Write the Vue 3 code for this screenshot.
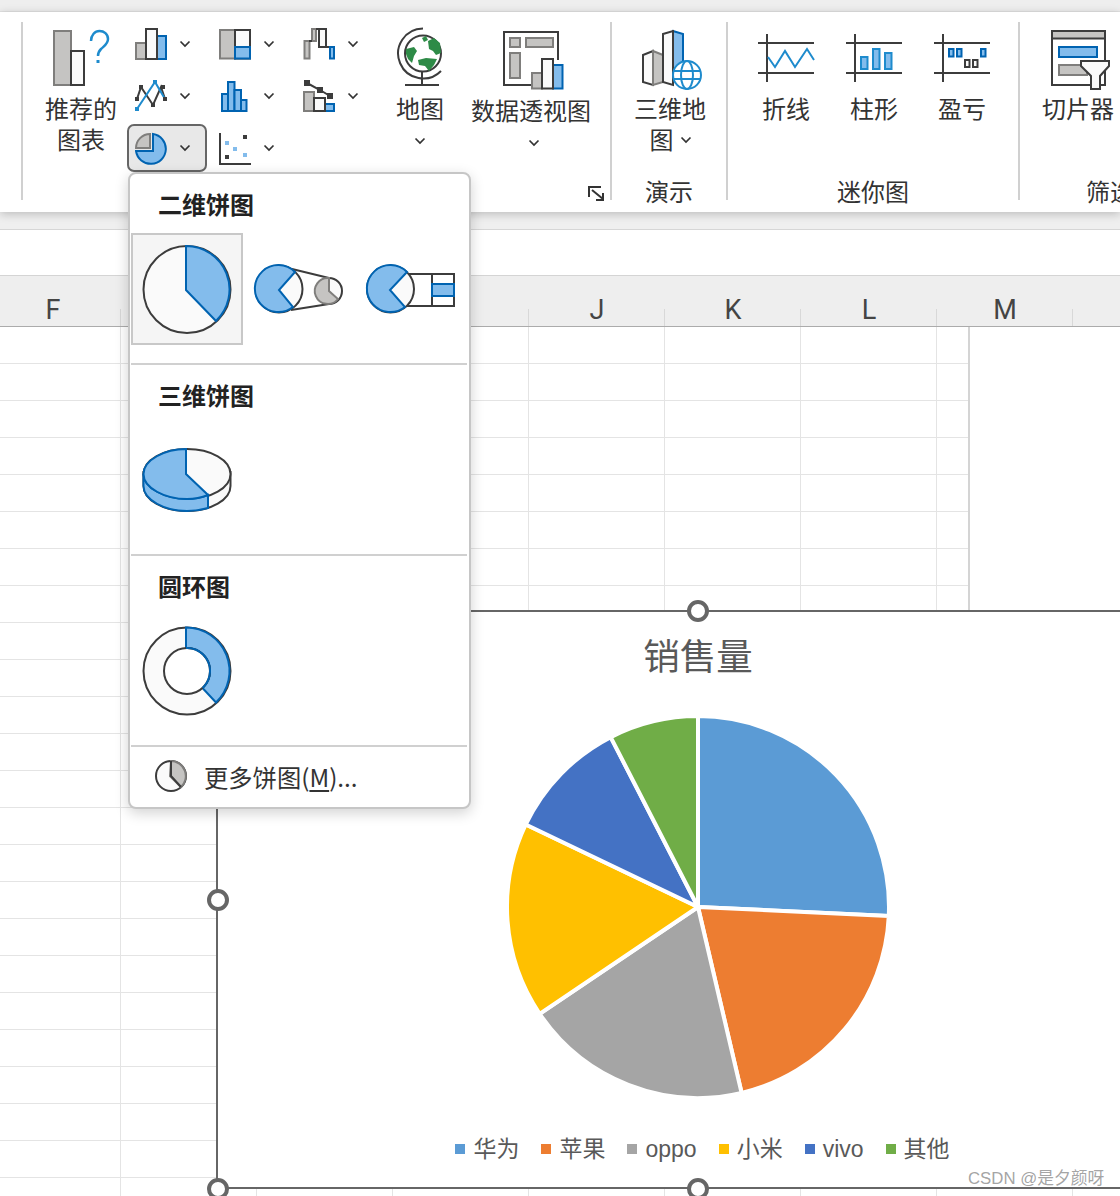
<script setup>
const columns = ['F', 'G', 'H', 'I', 'J', 'K', 'L', 'M', 'N']
const headerLabels = { F: 'F', J: 'J', K: 'K', L: 'L', M: 'M' }
const cells = Array.from({ length: 24 * 9 }, (_, i) => i)

const slices = [
  { name: '华为', color: '#5B9BD5', from: 0, to: 92.7 },
  { name: '苹果', color: '#ED7D31', from: 92.7, to: 166.8 },
  { name: 'oppo', color: '#A5A5A5', from: 166.8, to: 236 },
  { name: '小米', color: '#FFC000', from: 236, to: 295.6 },
  { name: 'vivo', color: '#4472C4', from: 295.6, to: 332.8 },
  { name: '其他', color: '#70AD47', from: 332.8, to: 360 }
]

const R = 191

function point(angle) {
  const a = (angle * Math.PI) / 180
  return `${(200 + R * Math.sin(a)).toFixed(2)} ${(200 - R * Math.cos(a)).toFixed(2)}`
}

function slicePath(s) {
  const large = s.to - s.from > 180 ? 1 : 0
  return `M200 200 L${point(s.from)} A${R} ${R} 0 ${large} 1 ${point(s.to)} Z`
}
</script>

<template>
  <div class="page">
    <div class="topstrip"></div>

    <div class="ribbon">
      <section class="group g1">
        <div class="cmds">
          <div class="big rec">
            <svg class="ico" width="60" height="72" viewBox="51 22 60 72">
              <rect x="54" y="31" width="17" height="54" class="gray" />
              <rect x="71" y="51" width="13" height="34" class="white" />
              <path d="M91 41C91 35 95 31 99.500 31C104 31 108 34 108 39C108 44 104 46 101 49C99 51 98 52 98 56" fill="none" stroke="#1e8bcd" stroke-width="2.500" />
              <rect x="96.500" y="60" width="3" height="3" fill="#1e8bcd" />
            </svg>
            <span class="lbl">推荐的<br />图表</span>
          </div>

          <div class="smallgrid">
            <div class="small">
              <svg width="33" height="33" viewBox="135 28 33 33">
                <rect x="136" y="43" width="10" height="16" class="gray" />
                <rect x="157" y="36" width="9" height="23" class="blue" />
                <rect x="146" y="29" width="11" height="30" class="white" />
              </svg>
              <svg class="chev" width="10" height="6" viewBox="0 0 10 6"><path d="M.5.5 5 5 9.500.5" /></svg>
            </div>
            <div class="small">
              <svg width="33" height="33" viewBox="219 28 33 33">
                <rect x="220" y="30" width="15" height="28.500" class="gray" />
                <rect x="235" y="30" width="15" height="28.500" class="white" />
                <rect x="235" y="47" width="15" height="11.500" class="blue" />
              </svg>
              <svg class="chev" width="10" height="6" viewBox="0 0 10 6"><path d="M.5.5 5 5 9.500.5" /></svg>
            </div>
            <div class="small">
              <svg width="33" height="33" viewBox="303 28 33 33">
                <rect x="304.500" y="41" width="5" height="17.500" class="gray" />
                <rect x="312" y="29" width="4" height="12" class="gray" />
                <path d="M309 41H312M316 29H319M326 47H330" class="line" />
                <rect x="319" y="29" width="7" height="18" class="white" />
                <rect x="330" y="47" width="4" height="11.500" class="blue" />
              </svg>
              <svg class="chev" width="10" height="6" viewBox="0 0 10 6"><path d="M.5.5 5 5 9.500.5" /></svg>
            </div>

            <div class="small">
              <svg width="33" height="33" viewBox="135 79 33 33">
                <path d="M137 98 141 86 153 104 161 86 165 98" class="line" />
                <path d="M137 108 155 81 165 98" fill="none" stroke="#1e8bcd" stroke-width="2" />
                <rect x="135" y="96" width="4" height="4" fill="#3c3c3c" />
                <rect x="139" y="84" width="4" height="4" fill="#3c3c3c" />
                <rect x="151" y="102" width="4" height="4" fill="#3c3c3c" />
                <rect x="161" y="84" width="4" height="4" fill="#3c3c3c" />
                <rect x="163" y="96" width="4" height="4" fill="#3c3c3c" />
                <rect x="135" y="106" width="4" height="4" fill="#1e8bcd" />
                <rect x="153" y="79" width="4" height="4" fill="#1e8bcd" />
              </svg>
              <svg class="chev" width="10" height="6" viewBox="0 0 10 6"><path d="M.5.5 5 5 9.500.5" /></svg>
            </div>
            <div class="small">
              <svg width="33" height="33" viewBox="219 79 33 33">
                <rect x="222" y="93" width="6" height="17" class="blue" />
                <rect x="228" y="81" width="6.500" height="29" class="blue" />
                <rect x="234.500" y="89" width="6.500" height="21" class="blue" />
                <rect x="241" y="99" width="5.500" height="11" class="blue" />
              </svg>
              <svg class="chev" width="10" height="6" viewBox="0 0 10 6"><path d="M.5.5 5 5 9.500.5" /></svg>
            </div>
            <div class="small">
              <svg width="33" height="33" viewBox="303 79 33 33">
                <rect x="304" y="91" width="10" height="19" class="gray" />
                <rect x="325" y="103" width="9" height="7" class="blue" />
                <rect x="314" y="97" width="11" height="13" class="white" />
                <path d="M307 82 320 89 330 95" class="line" />
                <rect x="304" y="79" width="6" height="6" fill="#3c3c3c" />
                <rect x="317" y="86" width="6" height="6" fill="#3c3c3c" />
                <rect x="327" y="92" width="6" height="6" fill="#3c3c3c" />
              </svg>
              <svg class="chev" width="10" height="6" viewBox="0 0 10 6"><path d="M.5.5 5 5 9.500.5" /></svg>
            </div>

            <div class="small active">
              <svg width="33" height="33" viewBox="135 131 33 33">
                <path d="M150 147H136A14 14 0 0 1 150 133Z" class="gray" />
                <path d="M153 133A15 15 0 1 1 136 150H153Z" class="blue" />
              </svg>
              <svg class="chev" width="10" height="6" viewBox="0 0 10 6"><path d="M.5.5 5 5 9.500.5" /></svg>
            </div>
            <div class="small">
              <svg width="33" height="33" viewBox="219 131 33 33">
                <path d="M220 132V163H251" class="line" />
                <rect x="243" y="134" width="4" height="4" fill="#3c3c3c" />
                <rect x="225" y="154" width="4" height="4" fill="#3c3c3c" />
                <rect x="225" y="140" width="4" height="4" fill="#83bcec" />
                <rect x="233" y="146" width="4" height="4" fill="#83bcec" />
                <rect x="243" y="152" width="4" height="4" fill="#83bcec" />
              </svg>
              <svg class="chev" width="10" height="6" viewBox="0 0 10 6"><path d="M.5.5 5 5 9.500.5" /></svg>
            </div>
          </div>

          <div class="big map">
            <svg class="ico" width="50" height="72" viewBox="395 22 50 72">
              <path d="M423 28.500A25 25 0 1 0 441 71" fill="none" stroke="#3c3c3c" stroke-width="2" />
              <circle cx="423" cy="53.500" r="18" fill="#fff" stroke="#3c3c3c" stroke-width="2" />
              <path d="M422 38 426 36 428 40 424 42ZM428 41 434 38 440 43 441 53 436 55 433 51 429 49ZM406 49 414 47 417 51 414 56 412 63 408 59 406 54ZM418 60 426 58 437 59 434 65 429 71 425 66 419 65Z" fill="#2e8b47" />
              <path d="M422 72V85M405 85H439" class="line" />
            </svg>
            <span class="lbl">地图</span>
            <span class="chevrow"><svg class="chev flat" width="10" height="6" viewBox="0 0 10 6"><path d="M.5.5 5 5 9.500.5" /></svg></span>
          </div>

          <div class="big pivot">
            <svg class="ico" width="62" height="72" viewBox="500 22 62 72" overflow="visible">
              <path d="M531 85H504V32H558V60" class="line" />
              <rect x="510" y="38" width="10" height="9" class="gray" />
              <rect x="526" y="38" width="27" height="9" class="gray" />
              <rect x="510" y="53" width="10" height="25" class="gray" />
              <rect x="532" y="73" width="10" height="15.500" class="gray" />
              <rect x="553" y="65" width="9.500" height="23.500" class="blue" />
              <rect x="542" y="59" width="11" height="29.500" class="white" />
            </svg>
            <span class="lbl low">数据透视图</span>
            <span class="chevrow nudge"><svg class="chev flat" width="10" height="6" viewBox="0 0 10 6"><path d="M.5.5 5 5 9.500.5" /></svg></span>
          </div>
        </div>
        <div class="glabel">图表</div>
        <svg class="launcher" width="17" height="15" viewBox="0 0 17 15">
          <path d="M1 11V1H13M4 4 15 13M15 7V14H8" fill="none" stroke="#333" stroke-width="2" />
        </svg>
      </section>

      <section class="group g2">
        <div class="cmds">
          <div class="big m3d">
            <svg class="ico" width="64" height="72" viewBox="638 22 64 72" overflow="visible">
              <path d="M643 55 653 51V85L643 82Z" class="white" />
              <path d="M653 51 663 55V82L653 85Z" class="gray" />
              <path d="M673 31 683 34V70H673Z" class="blue" />
              <path d="M663 34 673 31V85L663 82Z" class="white" />
              <g fill="#fff" stroke="#1e8bcd" stroke-width="2">
                <circle cx="687" cy="75" r="14" />
                <ellipse cx="687" cy="75" rx="6" ry="14" />
                <path d="M673 71H701M673 79H701" />
              </g>
            </svg>
            <span class="lbl">三维地<br />图<svg class="chev inline" width="10" height="6" viewBox="0 0 10 6"><path d="M.5.5 5 5 9.500.5" /></svg></span>
          </div>
        </div>
        <div class="glabel">演示</div>
      </section>

      <section class="group g3">
        <div class="cmds">
          <div class="big spark">
            <svg class="ico" width="58" height="72" viewBox="757 22 58 72">
              <path d="M758 43H814M758 73H814M767 34V82" class="line" />
              <path d="M768 57 775 67 785 51 795 67 807 49 814 60" fill="none" stroke="#1e8bcd" stroke-width="2" />
            </svg>
            <span class="lbl">折线</span>
          </div>
          <div class="big spark">
            <svg class="ico" width="58" height="72" viewBox="845 22 58 72">
              <path d="M846 43H902M846 73H902M855 34V82" class="line" />
              <rect x="861" y="57" width="6.500" height="12" class="sky" />
              <rect x="873" y="49" width="6.500" height="20" class="sky" />
              <rect x="885" y="53" width="6.500" height="16" class="sky" />
            </svg>
            <span class="lbl">柱形</span>
          </div>
          <div class="big spark">
            <svg class="ico" width="58" height="72" viewBox="933 22 58 72">
              <path d="M934 43H990M934 73H990M943 34V82" class="line" />
              <rect x="949" y="49" width="4.500" height="7.500" class="blue" />
              <rect x="957" y="49" width="4.500" height="7.500" class="blue" />
              <rect x="981" y="49" width="4.500" height="7.500" class="blue" />
              <rect x="965" y="60" width="4.500" height="7" class="white" />
              <rect x="973" y="60" width="4.500" height="7" class="white" />
            </svg>
            <span class="lbl">盈亏</span>
          </div>
        </div>
        <div class="glabel">迷你图</div>
      </section>

      <section class="group g4">
        <div class="cmds">
          <div class="big slicer">
            <svg class="ico" width="62" height="72" viewBox="1047 22 62 72" overflow="visible">
              <rect x="1052" y="31" width="53" height="54" fill="#fff" stroke="#3c3c3c" stroke-width="2" />
              <rect x="1053" y="32" width="51" height="6" fill="#c5c4c2" />
              <path d="M1052 38.500H1105" class="line" />
              <rect x="1059" y="47" width="38" height="10" class="blue" />
              <rect x="1059" y="65" width="28" height="10" class="gray" />
              <path d="M1081 61H1109V66L1100 76V89H1091V76L1081 66Z" class="white" />
            </svg>
            <span class="lbl">切片器</span>
          </div>
        </div>
        <div class="glabel">筛选器</div>
      </section>
    </div>

    <div class="formula"></div>

    <div class="colhead">
      <div v-for="c in columns" :key="c" class="colcell">{{ headerLabels[c] }}</div>
    </div>

    <div class="sheet">
      <div v-for="i in cells" :key="i" class="cell"></div>
    </div>

    <div class="pane"></div>

    <div class="chart">
      <div class="ctitle">销售量</div>
      <svg class="pie" width="400" height="400" viewBox="0 0 400 400">
        <path v-for="s in slices" :key="s.name" :d="slicePath(s)" :fill="s.color" stroke="#fff" stroke-width="4" stroke-linejoin="round" />
      </svg>
      <div class="legend">
        <div v-for="s in slices" :key="s.name" class="legitem">
          <i class="swatch" :style="{ background: s.color }"></i><span>{{ s.name }}</span>
        </div>
      </div>
      <i class="handle h-top"></i>
      <i class="handle h-left"></i>
      <i class="handle h-bl"></i>
      <i class="handle h-bottom"></i>
    </div>

    <div class="menu">
      <div class="mhead">二维饼图</div>
      <div class="tiles">
        <div class="tile selected">
          <svg width="108" height="108" viewBox="133 235 108 108">
            <circle cx="187" cy="289.500" r="43.500" class="white" />
            <path d="M186 246A43.500 43.500 0 0 1 216 321L186 290Z" class="blue" />
          </svg>
        </div>
        <div class="tile">
          <svg width="112" height="112" viewBox="243 233 112 112">
            <path d="M292 269 329 278M291 310 329 304" class="line" />
            <circle cx="279" cy="289" r="23.500" class="white" />
            <path d="M295 272 279 290 293 307A23.500 23.500 0 1 1 295 272Z" class="blue" />
            <circle cx="329" cy="291" r="13" class="white" />
            <path d="M329 278V291L338 299A13 13 0 1 1 329 278Z" class="gray" />
          </svg>
        </div>
        <div class="tile">
          <svg width="112" height="112" viewBox="355 233 112 112">
            <path d="M407 274H454V306H406" class="line" />
            <path d="M432 274V306" class="line" />
            <circle cx="390.500" cy="289" r="23.500" class="white" />
            <path d="M407 272 390 290 405 307A23.500 23.500 0 1 1 407 272Z" class="blue" />
            <rect x="432" y="284" width="22" height="12" class="blue" />
          </svg>
        </div>
      </div>
      <div class="msep"></div>

      <div class="mhead">三维饼图</div>
      <div class="tiles">
        <div class="tile">
          <svg width="112" height="112" viewBox="131 424 112 112">
            <path d="M143.500 472V486A43.500 25 0 0 0 230.500 486V472Z" class="white" />
            <ellipse cx="187" cy="474" rx="43.500" ry="25" class="white" />
            <path d="M143.500 474V486C143.500 500 165 511 187 511Q198 511 208 508V495Q198 499 187 499C165 499 143.500 488 143.500 474Z" class="blue" />
            <path d="M186 449C165 449 143.500 460 143.500 474C143.500 488 165 499 187 499Q198 499 208 495L186 474Z" class="blue" />
          </svg>
        </div>
      </div>
      <div class="msep"></div>

      <div class="mhead">圆环图</div>
      <div class="tiles">
        <div class="tile">
          <svg width="112" height="112" viewBox="131 615 112 112">
            <circle cx="187" cy="671" r="43.500" class="white" />
            <path d="M186 627.500A43.500 43.500 0 0 1 216 702.500L202.500 688A23 23 0 0 0 186 648Z" class="blue" />
            <circle cx="187" cy="671" r="23" fill="#fff" stroke="#3c3c3c" stroke-width="2" />
            <path d="M186 648A23 23 0 0 1 202.500 688" fill="none" stroke="#0063b1" stroke-width="2" />
          </svg>
        </div>
      </div>
      <div class="msep"></div>

      <div class="more">
        <svg width="34" height="34" viewBox="154 759 34 34">
          <circle cx="171" cy="776" r="15" class="white" />
          <path d="M171 761A15 15 0 0 1 181 787L170 776Z" class="gray" />
          <path d="M171 761V776L181 787" class="line" />
        </svg>
        <span>更多饼图(<u>M</u>)...</span>
      </div>
    </div>

    <div class="watermark">CSDN @是夕颜呀</div>
  </div>
</template>

<style scoped>
.page {
  position: relative;
  width: 1120px;
  height: 1196px;
  overflow: hidden;
  background: #efefef;
  font-family: "Noto Sans CJK SC", "Noto Sans", sans-serif;
  color: #333;
}
.topstrip {
  height: 11px;
  background: #eeeeee;
  border-bottom: 1px solid #e2e2e2;
}
.ribbon {
  position: relative;
  z-index: 2;
  display: flex;
  box-sizing: border-box;
  height: 200px;
  padding: 10px 0 0 21px;
  background: #fff;
  box-shadow: 0 2px 9px rgba(0, 0, 0, 0.22);
  overflow: hidden;
}
.group {
  position: relative;
  flex: none;
  box-sizing: border-box;
  height: 178px;
  border-left: 2px solid #d0d0d0;
}
.g1 { width: 589px; }
.g2 { width: 116px; }
.g3 { width: 292px; }
.g4 { width: 206px; }
.cmds {
  display: flex;
  height: 153px;
}
.glabel {
  height: 32px;
  font-size: 24px;
  line-height: 32px;
  text-align: center;
  white-space: nowrap;
}
.big {
  flex: none;
  display: flex;
  flex-direction: column;
  align-items: center;
  width: 80px;
  font-size: 24px;
  line-height: 31px;
  text-align: center;
}
.ico {
  display: block;
  flex: none;
}
.lbl {
  margin: -2px 0 2px;
  white-space: nowrap;
}
.lbl.low { margin: 0 0 2px; }
.rec { margin-left: 18px; }
.m3d, .slicer { margin-left: 18px; }
.pivot { width: 142px; }
.spark { width: 88px; }
.spark:first-child { margin-left: 14px; }
.chevrow {
  display: flex;
  align-items: center;
  justify-content: center;
  height: 31px;
}
.chevrow.nudge { margin-left: 6px; }
.smallgrid {
  flex: none;
  display: grid;
  grid-template-columns: repeat(3, 84px);
  grid-auto-rows: 52px;
  align-items: center;
  height: 156px;
  margin: -4px 1px 0 6px;
}
.small {
  display: flex;
  align-items: center;
  box-sizing: border-box;
  width: 80px;
  height: 48px;
  padding-left: 6px;
  border: 2px solid transparent;
  border-radius: 7px;
}
.small.active {
  background: #e8e8e8;
  border-color: #666;
}
.chev {
  flex: none;
  margin-left: 12px;
  overflow: visible;
}
.chev path {
  fill: none;
  stroke: #333;
  stroke-width: 1.7;
}
.chev.flat { margin-left: 0; }
.chev.inline {
  margin-left: 7px;
  vertical-align: 6px;
}
.launcher {
  position: absolute;
  top: 164px;
  right: 5px;
}

.gray { fill: #c5c4c2; stroke: #7f7e7c; stroke-width: 2; }
.white { fill: #fafafa; stroke: #3c3c3c; stroke-width: 2; }
.blue { fill: #83bcec; stroke: #0063b1; stroke-width: 2; }
.sky { fill: #83bcec; stroke: #1e8bcd; stroke-width: 2; }
.line { fill: none; stroke: #3c3c3c; stroke-width: 2; }

.formula {
  box-sizing: border-box;
  height: 64px;
  background: linear-gradient(#efefef 0 17px, #d6d6d6 17px 18px, #fff 18px);
  border-bottom: 1px solid #d4d4d4;
}
.colhead {
  display: flex;
  box-sizing: border-box;
  width: 1240px;
  height: 51px;
  margin-left: -15px;
  background: #eeeeee;
  border-bottom: 1px solid #ababab;
}
.colcell {
  position: relative;
  flex: none;
  display: flex;
  align-items: center;
  justify-content: center;
  box-sizing: border-box;
  width: 136px;
  padding-top: 17px;
  font-family: Roboto, "Noto Sans", sans-serif;
  font-size: 27px;
  color: #444;
}
.colcell::after {
  content: "";
  position: absolute;
  right: 0;
  bottom: 0;
  height: 17px;
  border-right: 1px solid #d8d8d8;
}
.sheet {
  display: grid;
  grid-template-columns: repeat(9, 136px);
  grid-auto-rows: 37px;
  width: 1224px;
  margin-left: -15px;
  background: #fff;
}
.cell {
  box-sizing: border-box;
  border-right: 1px solid #e4e4e4;
  border-bottom: 1px solid #e4e4e4;
}
.pane {
  position: absolute;
  left: 968px;
  top: 327px;
  box-sizing: border-box;
  width: 152px;
  height: 284px;
  background: #fff;
  border-left: 2px solid #d4d4d4;
}
.chart {
  position: absolute;
  left: 216px;
  top: 610px;
  z-index: 3;
  display: flex;
  flex-direction: column;
  align-items: center;
  box-sizing: border-box;
  width: 964px;
  height: 579px;
  padding-right: 2px;
  background: #fff;
  border: 2px solid #666;
  border-right: 0;
}
.ctitle {
  height: 40px;
  margin-top: 23px;
  font-size: 36.500px;
  line-height: 40px;
  color: #595959;
}
.pie {
  flex: none;
  margin-top: 32px;
}
.legend {
  display: flex;
  gap: 22px;
  height: 32px;
  margin-top: 26px;
  padding-left: 9px;
  font-family: "Liberation Sans", "Noto Sans CJK SC", sans-serif;
  font-size: 23px;
  line-height: 32px;
  color: #595959;
}
.legitem {
  display: flex;
  align-items: center;
  gap: 8px;
  white-space: nowrap;
}
.swatch {
  flex: none;
  width: 10px;
  height: 10px;
}
.handle {
  position: absolute;
  box-sizing: border-box;
  width: 22px;
  height: 22px;
  background: #fff;
  border: 4px solid #666;
  border-radius: 50%;
}
.h-top { left: 469px; top: -12px; }
.h-left { left: -11px; top: 277px; }
.h-bl { left: -11px; top: 566px; }
.h-bottom { left: 469px; top: 566px; }

.menu {
  position: absolute;
  left: 128px;
  top: 172px;
  z-index: 5;
  box-sizing: border-box;
  width: 343px;
  height: 637px;
  background: #fff;
  border: 2px solid #c6c6c6;
  border-radius: 8px;
  box-shadow: 0 4px 14px rgba(0, 0, 0, 0.18);
}
.mhead {
  height: 32px;
  margin-top: 14px;
  padding-left: 28px;
  font-size: 24px;
  font-weight: 700;
  line-height: 32px;
  color: #222;
}
.tiles {
  display: flex;
  height: 112px;
  margin: 13px 0 18px 1px;
}
.tile {
  flex: none;
  display: flex;
  align-items: center;
  justify-content: center;
  box-sizing: border-box;
  width: 112px;
  height: 112px;
}
.tile svg { display: block; }
.tile.selected {
  background: #f5f5f5;
  border: 2px solid #c8c8c8;
}
.msep {
  height: 2px;
  margin: 0 2px 0 1px;
  background: #d0d0d0;
}
.more {
  display: flex;
  align-items: center;
  gap: 16px;
  box-sizing: border-box;
  height: 60px;
  padding: 0 0 2px 24px;
  font-size: 24.300px;
  color: #333;
}
.more u { text-underline-offset: 3px; }
.more svg { flex: none; }
.watermark {
  position: absolute;
  left: 968px;
  top: 1167px;
  z-index: 6;
  font-family: "Liberation Sans", "Noto Sans CJK SC", sans-serif;
  font-size: 16.800px;
  line-height: 24px;
  color: rgba(140, 140, 140, 0.8);
  white-space: nowrap;
}
</style>
